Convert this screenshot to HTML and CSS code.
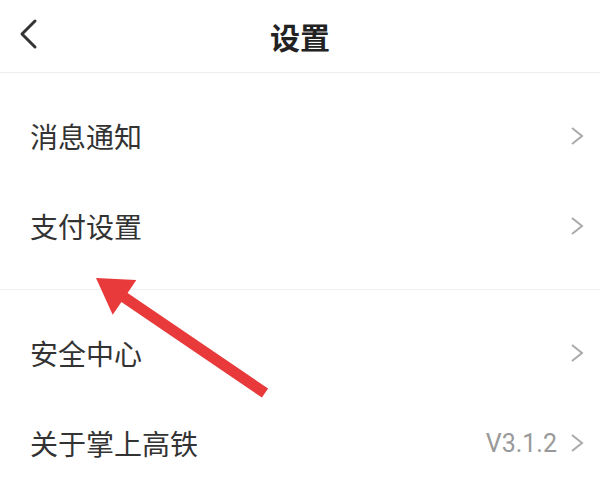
FILE: index.html
```html
<!DOCTYPE html>
<html lang="zh-CN">
<head>
  <meta charset="UTF-8">
  <meta name="viewport" content="width=device-width, initial-scale=1.0">
  <title>设置</title>
  <link rel="stylesheet" href="styles.css">
</head>
<body>
  <div class="page">
    <!-- Top bar -->
    <header class="topbar">
      <span class="back">
        <svg width="20" height="32" viewBox="0 0 20 32">
          <path d="M17 3 L4 16 L17 29" fill="none" stroke="#333" stroke-width="3" stroke-linecap="round" stroke-linejoin="round"/>
        </svg>
      </span>
      <h1 class="title">设置</h1>
      <span class="spacer"></span>
    </header>

    <!-- Settings list -->
    <section class="group">
      <div class="row">
        <span class="label">消息通知</span>
        <span class="right"><svg class="chev" width="14" height="20" viewBox="0 0 14 20"><path d="M2 2 L12 10 L2 18" fill="none" stroke="#aaa" stroke-width="2"/></svg></span>
      </div>
      <div class="row">
        <span class="label">支付设置</span>
        <span class="right"><svg class="chev" width="14" height="20" viewBox="0 0 14 20"><path d="M2 2 L12 10 L2 18" fill="none" stroke="#aaa" stroke-width="2"/></svg></span>
      </div>
    </section>

    <section class="group">
      <div class="row">
        <span class="label">安全中心</span>
        <span class="right"><svg class="chev" width="14" height="20" viewBox="0 0 14 20"><path d="M2 2 L12 10 L2 18" fill="none" stroke="#aaa" stroke-width="2"/></svg></span>
      </div>
      <div class="row">
        <span class="label">关于掌上高铁</span>
        <span class="right"><span class="version">V3.1.2</span><svg class="chev" width="14" height="20" viewBox="0 0 14 20"><path d="M2 2 L12 10 L2 18" fill="none" stroke="#aaa" stroke-width="2"/></svg></span>
      </div>
    </section>

    <!-- Annotation arrow -->
    <svg class="arrow" width="600" height="493" viewBox="0 0 600 493">
      <polygon points="96,278 136.3,280 127.6,292.9 268.1,388.5 261.9,397.5 121.4,302 112.7,314.8" fill="#e83a3a"/>
    </svg>
  </div>
</body>
</html>
```

FILE: styles.css
```css
/* General */
body {
  margin: 0;
  background: #fff;
  font-family: 'Noto Sans CJK SC', 'Noto Sans', sans-serif;
  color: #333;
}

.page {
  position: relative;
  width: 600px;
  height: 493px;
  overflow: hidden;
}

/* Top bar */
.topbar {
  height: 72px;
  display: grid;
  grid-template-columns: 1fr auto 1fr;
  align-items: center;
  border-bottom: 1px solid #eeeeee;
}

.back {
  display: flex;
  align-items: center;
  padding-left: 18px;
  margin-top: -4px;
}

.title {
  margin: 0;
  font-size: 30px;
  font-weight: bold;
  color: #222;
  line-height: 1;
}

/* List */
.group {
  padding: 18px 0 18px;
}

.group + .group {
  border-top: 1px solid #f0f0f0;
  padding-top: 18px;
}

.row {
  height: 90px;
  display: flex;
  align-items: center;
  justify-content: space-between;
  padding: 0 16px 0 30px;
}

.label {
  font-size: 28px;
  color: #333;
}

.right {
  display: flex;
  align-items: center;
  gap: 13px;
}

.version {
  font-family: 'Roboto', sans-serif;
  font-size: 25px;
  color: #999;
}

.chev {
  display: block;
}

/* Annotation */
.arrow {
  position: absolute;
  top: 0;
  left: 0;
  pointer-events: none;
}
```
